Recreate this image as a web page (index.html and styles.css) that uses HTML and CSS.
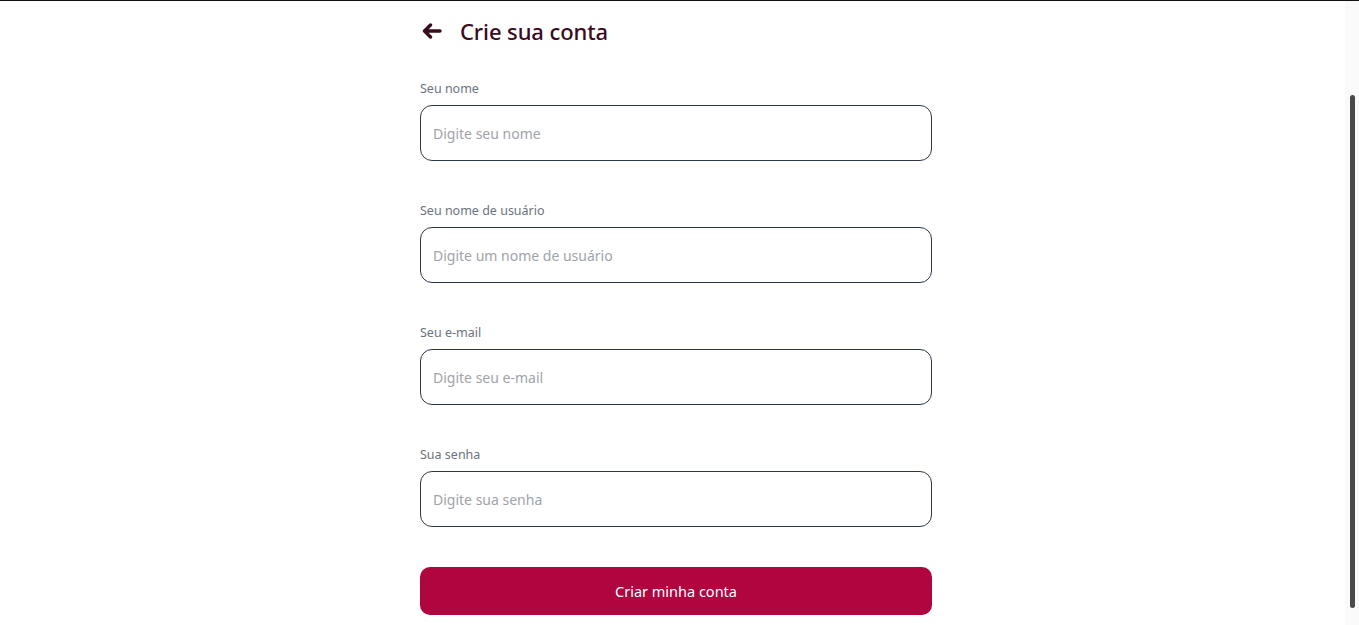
FILE: index.html
```html
<!DOCTYPE html>
<html lang="pt-BR">
<head>
<meta charset="utf-8">
<title>Crie sua conta</title>
<link rel="stylesheet" href="styles.css">
</head>
<body>
<div class="page">
  <header class="header">
    <button class="back" aria-label="Voltar">
      <svg width="20" height="16" viewBox="0 0 20 16" aria-hidden="true">
        <path d="M18 8H3M8.5 2L2.5 8l6 6" fill="none" stroke="#3a0a1e" stroke-width="3.4" stroke-linecap="round" stroke-linejoin="round"/>
      </svg>
    </button>
    <h1 class="title">Crie sua conta</h1>
  </header>
  <form class="form">
    <label class="field">
      <span class="label">Seu nome</span>
      <input class="input" type="text" placeholder="Digite seu nome">
    </label>
    <label class="field">
      <span class="label">Seu nome de usuário</span>
      <input class="input" type="text" placeholder="Digite um nome de usuário">
    </label>
    <label class="field">
      <span class="label">Seu e-mail</span>
      <input class="input" type="email" placeholder="Digite seu e-mail">
    </label>
    <label class="field">
      <span class="label">Sua senha</span>
      <input class="input" type="password" placeholder="Digite sua senha">
    </label>
    <button class="submit" type="button">Criar minha conta</button>
  </form>
</div>
<div class="scrollbar"><div class="thumb"></div></div>
</body>
</html>
```

FILE: styles.css
```css
* { box-sizing: border-box; }
html, body { margin: 0; padding: 0; }
body {
  background: #fff;
  border-top: 1px solid #111;
  font-family: "Noto Sans", "Open Sans", sans-serif;
  overflow: hidden;
  height: 625px;
}
.page {
  width: 512px;
  margin-left: 420px;
}
.header {
  height: 60px;
  display: flex;
  align-items: center;
  gap: 18px;
}
.back {
  border: 0;
  background: none;
  padding: 0;
  margin-left: 2px;
  width: 20px;
  height: 16px;
  display: flex;
  cursor: pointer;
}
.title {
  margin: 0;
  font-size: 22px;
  font-weight: 500;
  color: #3a0a1e;
  letter-spacing: -0.1px;
}
.form {
  margin-top: 20px;
  display: flex;
  flex-direction: column;
}
.field {
  display: flex;
  flex-direction: column;
  margin-bottom: 42px;
}
.field:nth-child(4) { margin-bottom: 40px; }
.label {
  font-size: 12.5px;
  line-height: 16px;
  color: #6b7280;
  margin-bottom: 8px;
}
.input {
  height: 56px;
  border: 1px solid #2d3748;
  border-radius: 12px;
  padding: 0 12px;
  font-family: inherit;
  font-size: 14px;
  color: #222;
  outline: none;
}
.input::placeholder { color: #a0a3aa; }
.submit {
  height: 48px;
  border: 0;
  border-radius: 10px;
  background: #b0053f;
  color: #fff;
  font-family: inherit;
  font-size: 14.5px;
}
.scrollbar {
  position: absolute;
  top: 1px;
  right: 0;
  width: 14px;
  height: 624px;
  background: #fafafa;
}
.thumb {
  position: absolute;
  left: 5px;
  top: 94px;
  width: 5px;
  height: 513px;
  border-radius: 3px;
  background: #4a4a4a;
}
```
